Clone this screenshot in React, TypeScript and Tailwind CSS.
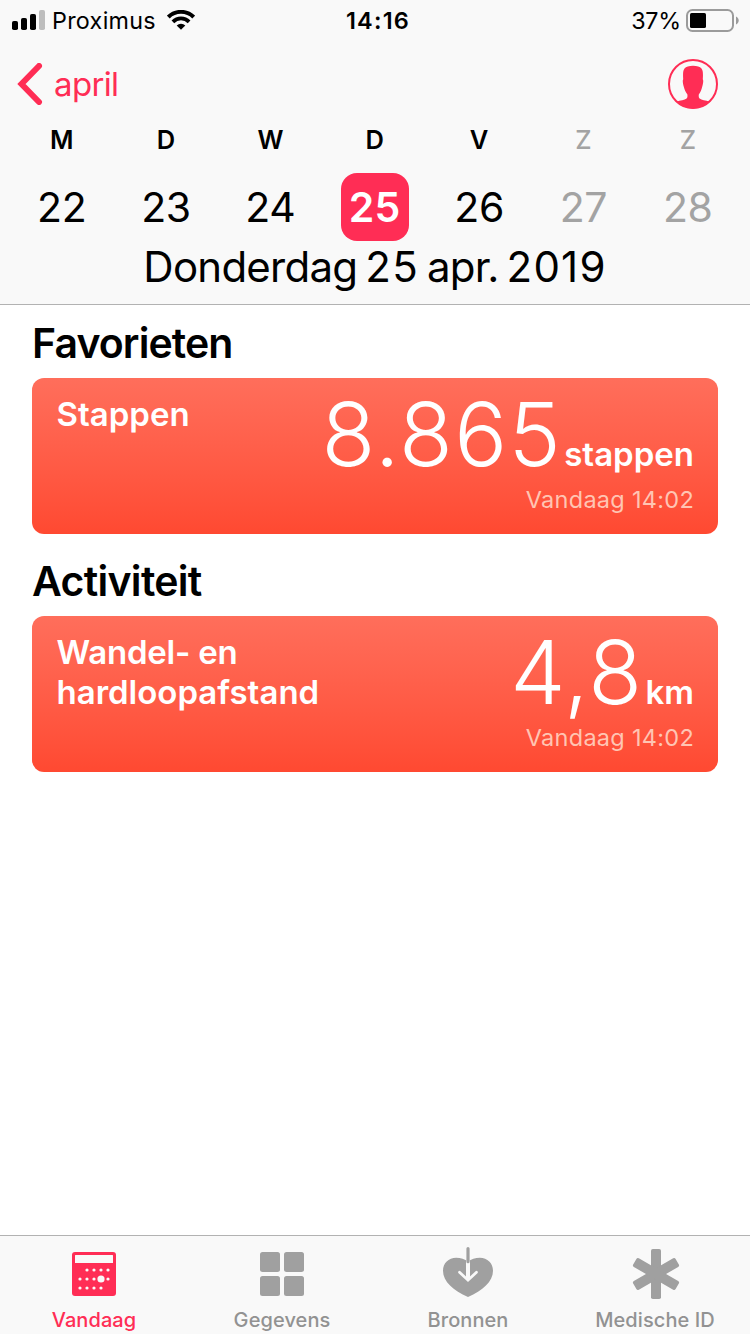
import React from "react";

type Day = { letter: string; date: number; today?: boolean; weekend?: boolean };

const week: Day[] = [
  { letter: "M", date: 22 },
  { letter: "D", date: 23 },
  { letter: "W", date: 24 },
  { letter: "D", date: 25, today: true },
  { letter: "V", date: 26 },
  { letter: "Z", date: 27, weekend: true },
  { letter: "Z", date: 28, weekend: true },
];

function SignalIcon() {
  return (
    <svg width="33" height="20" viewBox="0 0 33 20" className="mb-px shrink-0">
      <rect x="0" y="11" width="6" height="9" rx="1.8" />
      <rect x="9" y="8" width="6" height="12" rx="1.8" />
      <rect x="18" y="4" width="6" height="16" rx="1.8" />
      <rect x="27" y="0" width="6" height="20" rx="1.8" fill="#bdbdbd" />
    </svg>
  );
}

function WifiIcon() {
  return (
    <svg width="28" height="20" viewBox="0 0 28 20" className="mb-px ml-[11px] shrink-0" fill="none" stroke="#000">
      <path d="M1.3 7a18.2 18.2 0 0 1 25.4 0" strokeWidth="4" />
      <path d="M5.9 11.8a11.5 11.5 0 0 1 16.2 0" strokeWidth="3.8" />
      <path d="M14 19.8l-4.3-4.3a6 6 0 0 1 8.6 0z" fill="#000" stroke="none" />
    </svg>
  );
}

function BatteryIcon() {
  return (
    <svg width="53" height="23" viewBox="0 0 53 23" className="shrink-0">
      <rect x="1" y="1" width="46" height="21" rx="5.5" fill="none" stroke="#9b9b9b" strokeWidth="2" />
      <rect x="4" y="4" width="16" height="15" rx="1.6" />
      <path d="M50 7.5c3.6 1.6 3.6 6.4 0 8z" fill="#9b9b9b" />
    </svg>
  );
}

function StatusBar() {
  return (
    <div className="grid h-[41px] grid-cols-[1fr_auto_1fr] items-center text-[23.3px] leading-[41px]">
      <div className="flex items-center pl-3">
        <SignalIcon />
        <span className="ml-[7px] tracking-[0.3px]">Proximus</span>
        <WifiIcon />
      </div>
      <span className="pl-[6px] text-[23.5px] font-semibold tracking-[1.2px]">14:16</span>
      <div className="flex items-center justify-end pr-[11px]">
        <span className="mr-[5px] tracking-[-0.2px]">37%</span>
        <BatteryIcon />
      </div>
    </div>
  );
}

function ProfileIcon() {
  return (
    <svg width="50" height="50" viewBox="0 0 50 50">
      <circle cx="25" cy="25" r="24" fill="none" stroke="#ff2d55" strokeWidth="2" />
      <path
        d="M25 6.8C29 6.8 32 7.6 33.5 9.6C34.9 11.5 35.2 14 34.8 20.3C35.6 21 35.2 24.5 34.2 27.8C33.4 31 32.5 33.5 30.8 35.5C30.6 37.5 30.8 39 31.6 39.6C33.5 41.2 37.5 41.3 41.8 42.8A24.5 24.5 0 0 1 8.2 42.8C12.5 41.3 16.5 41.2 18.6 39.6C19.4 39 19.6 37.5 19.4 35.5C17.7 33.5 16.6 31 15.8 27.8C14.8 24.5 14.4 21 15.2 20.3C14.8 14 15.1 11.5 16.5 9.6C18 7.6 21 6.8 25 6.8z"
        fill="#ff2d55"
      />
    </svg>
  );
}

function NavRow() {
  return (
    <div className="flex h-[86px] items-center justify-between pr-8 pl-[17px]">
      <button className="flex items-center text-[33px] leading-[86px] tracking-[-0.65px] text-[#ff2d55]">
        <svg width="26" height="42" viewBox="0 0 26 42" fill="none" stroke="#ff2d55" strokeWidth="6" strokeLinecap="round">
          <path d="M22 3L4.5 21L22 39" />
        </svg>
        <span className="ml-[11px]">april</span>
      </button>
      <ProfileIcon />
    </div>
  );
}

function DayColumn({ letter, date, today, weekend }: Day) {
  return (
    <div className={weekend ? "flex flex-col items-center text-[#a3a3a3]" : "flex flex-col items-center"}>
      <span className={weekend ? "text-[25.5px] leading-[25px] font-medium" : "text-[25.5px] leading-[25px] font-semibold"}>
        {letter}
      </span>
      <span
        className={
          today
            ? "mt-[21px] h-[68px] w-[68px] rounded-[16px] bg-[#ff2d55] text-center text-[41px] leading-[68px] font-semibold tracking-[0.4px] text-white"
            : "mt-[21px] h-[68px] text-[41px] leading-[68px] tracking-[-0.4px]"
        }
      >
        {date}
      </span>
    </div>
  );
}

function Header() {
  return (
    <header className="h-[305px] border-b border-[#b2b2b2] bg-[#f9f9f9]">
      <StatusBar />
      <NavRow />
      <div className="grid grid-cols-7 pr-[10px] pl-[9.5px]">
        {week.map((d) => (
          <DayColumn key={d.date} {...d} />
        ))}
      </div>
      <p className="text-center text-[42px] leading-[52px] tracking-[-0.75px] [word-spacing:-3px]">
        Donderdag <span className="tracking-[1.2px]">25</span> apr. <span className="tracking-[1.2px]">2019</span>
      </p>
    </header>
  );
}

function Card({ label, value, unit, time }: { label: React.ReactNode; value: string; unit: string; time: string }) {
  return (
    <article className="flex h-[156px] justify-between rounded-[12px] bg-linear-to-b from-[#ff6e5b] to-[#ff4931] pr-[24px] pl-[24.5px] text-white">
      <h3 className="pt-4 text-[33px] leading-[40px] font-semibold">{label}</h3>
      <div className="flex flex-col items-end pt-3">
        <div className="flex h-[89px] items-baseline">
          <span className="mr-[2px] text-[88px] leading-[88px] font-light tracking-[1.4px]">{value}</span>
          <span className="text-[33px] leading-none font-semibold">{unit}</span>
        </div>
        <span className="text-[23.5px] leading-[42px] tracking-[0.28px] text-[#ffc5b3]">{time}</span>
      </div>
    </article>
  );
}

function CalendarIcon() {
  const dots = [
    [20, 23], [27, 23], [34, 23], [41, 23],
    [13, 32], [20, 32], [27, 32], [41, 32],
    [13, 41], [20, 41], [27, 41], [34, 41],
  ];
  return (
    <svg width="54" height="54" viewBox="0 0 54 54" fill="#f9f9f9">
      <rect x="5" y="5" width="44" height="44" rx="3" fill="#ff2d55" />
      <rect x="8" y="8" width="38" height="8" rx="0.5" />
      {dots.map(([x, y]) => (
        <circle key={`${x}-${y}`} cx={x} cy={y} r="1.6" />
      ))}
      <circle cx="34" cy="32" r="3.6" />
    </svg>
  );
}

function GridIcon() {
  return (
    <svg width="54" height="54" viewBox="0 0 54 54" fill="#a0a0a0">
      <rect x="5" y="5" width="20" height="20" rx="2.5" />
      <rect x="29" y="5" width="20" height="20" rx="2.5" />
      <rect x="5" y="29" width="20" height="20" rx="2.5" />
      <rect x="29" y="29" width="20" height="20" rx="2.5" />
    </svg>
  );
}

function HeartIcon() {
  return (
    <svg width="54" height="54" viewBox="0 0 54 54" fill="none">
      <path
        d="M27 14.8C30 12 34.5 10.8 38.8 10.8C46.5 10.8 52 16.3 52 23.8C52 34.5 41.5 44 27 50C12.5 44 2 34.5 2 23.8C2 16.3 7.5 10.8 15.2 10.8C19.5 10.8 24 12 27 14.8z"
        fill="#a0a0a0"
      />
      <path d="M27 13.5V33" stroke="#f9f9f9" strokeWidth="4" />
      <path d="M18.5 25.2L27 33.2l8.5-8" stroke="#f9f9f9" strokeWidth="2.8" strokeLinecap="round" />
      <path d="M27 1.7V14.7" stroke="#a0a0a0" strokeWidth="3.2" strokeLinecap="round" />
    </svg>
  );
}

function AsteriskIcon() {
  return (
    <svg width="54" height="54" viewBox="0 0 54 54" fill="#a0a0a0">
      <rect x="23" y="2" width="10" height="50" rx="1.8" />
      <rect x="23" y="2.5" width="10" height="49" rx="1.8" transform="rotate(60 28 27)" />
      <rect x="23" y="2.5" width="10" height="49" rx="1.8" transform="rotate(-60 28 27)" />
    </svg>
  );
}

function Tab({ label, icon, active }: { label: string; icon: React.ReactNode; active?: boolean }) {
  return (
    <button
      className={
        active
          ? "flex flex-col items-center pt-[11px] text-[#ff2d55]"
          : "flex flex-col items-center pt-[11px] text-[#929292]"
      }
    >
      {icon}
      <span className="mt-[6px] text-[20px] leading-[26px] font-medium tracking-[0.08px]">{label}</span>
    </button>
  );
}

export default function App() {
  return (
    <div className="flex h-[1334px] w-[750px] flex-col overflow-hidden bg-white font-['Inter',sans-serif] text-black">
      <Header />
      <main className="flex-1 px-8">
        <h2 className="pt-[3px] text-[41px] leading-[70px] font-semibold tracking-[-0.9px]">Favorieten</h2>
        <Card label="Stappen" value="8.865" unit="stappen" time="Vandaag 14:02" />
        <h2 className="pt-3 text-[41px] leading-[70px] font-semibold tracking-[-0.7px]">Activiteit</h2>
        <Card
          label={
            <>
              <span className="tracking-[-0.2px]">Wandel- en</span>
              <br />
              hardloopafstand
            </>
          }
          value="4,8"
          unit="km"
          time="Vandaag 14:02"
        />
      </main>
      <nav className="grid h-[99px] grid-cols-[188px_188px_184px_190px] border-t border-[#b2b2b2] bg-[#f9f9f9]">
        <Tab label="Vandaag" icon={<CalendarIcon />} active />
        <Tab label="Gegevens" icon={<GridIcon />} />
        <Tab label="Bronnen" icon={<HeartIcon />} />
        <Tab label="Medische ID" icon={<AsteriskIcon />} />
      </nav>
    </div>
  );
}
